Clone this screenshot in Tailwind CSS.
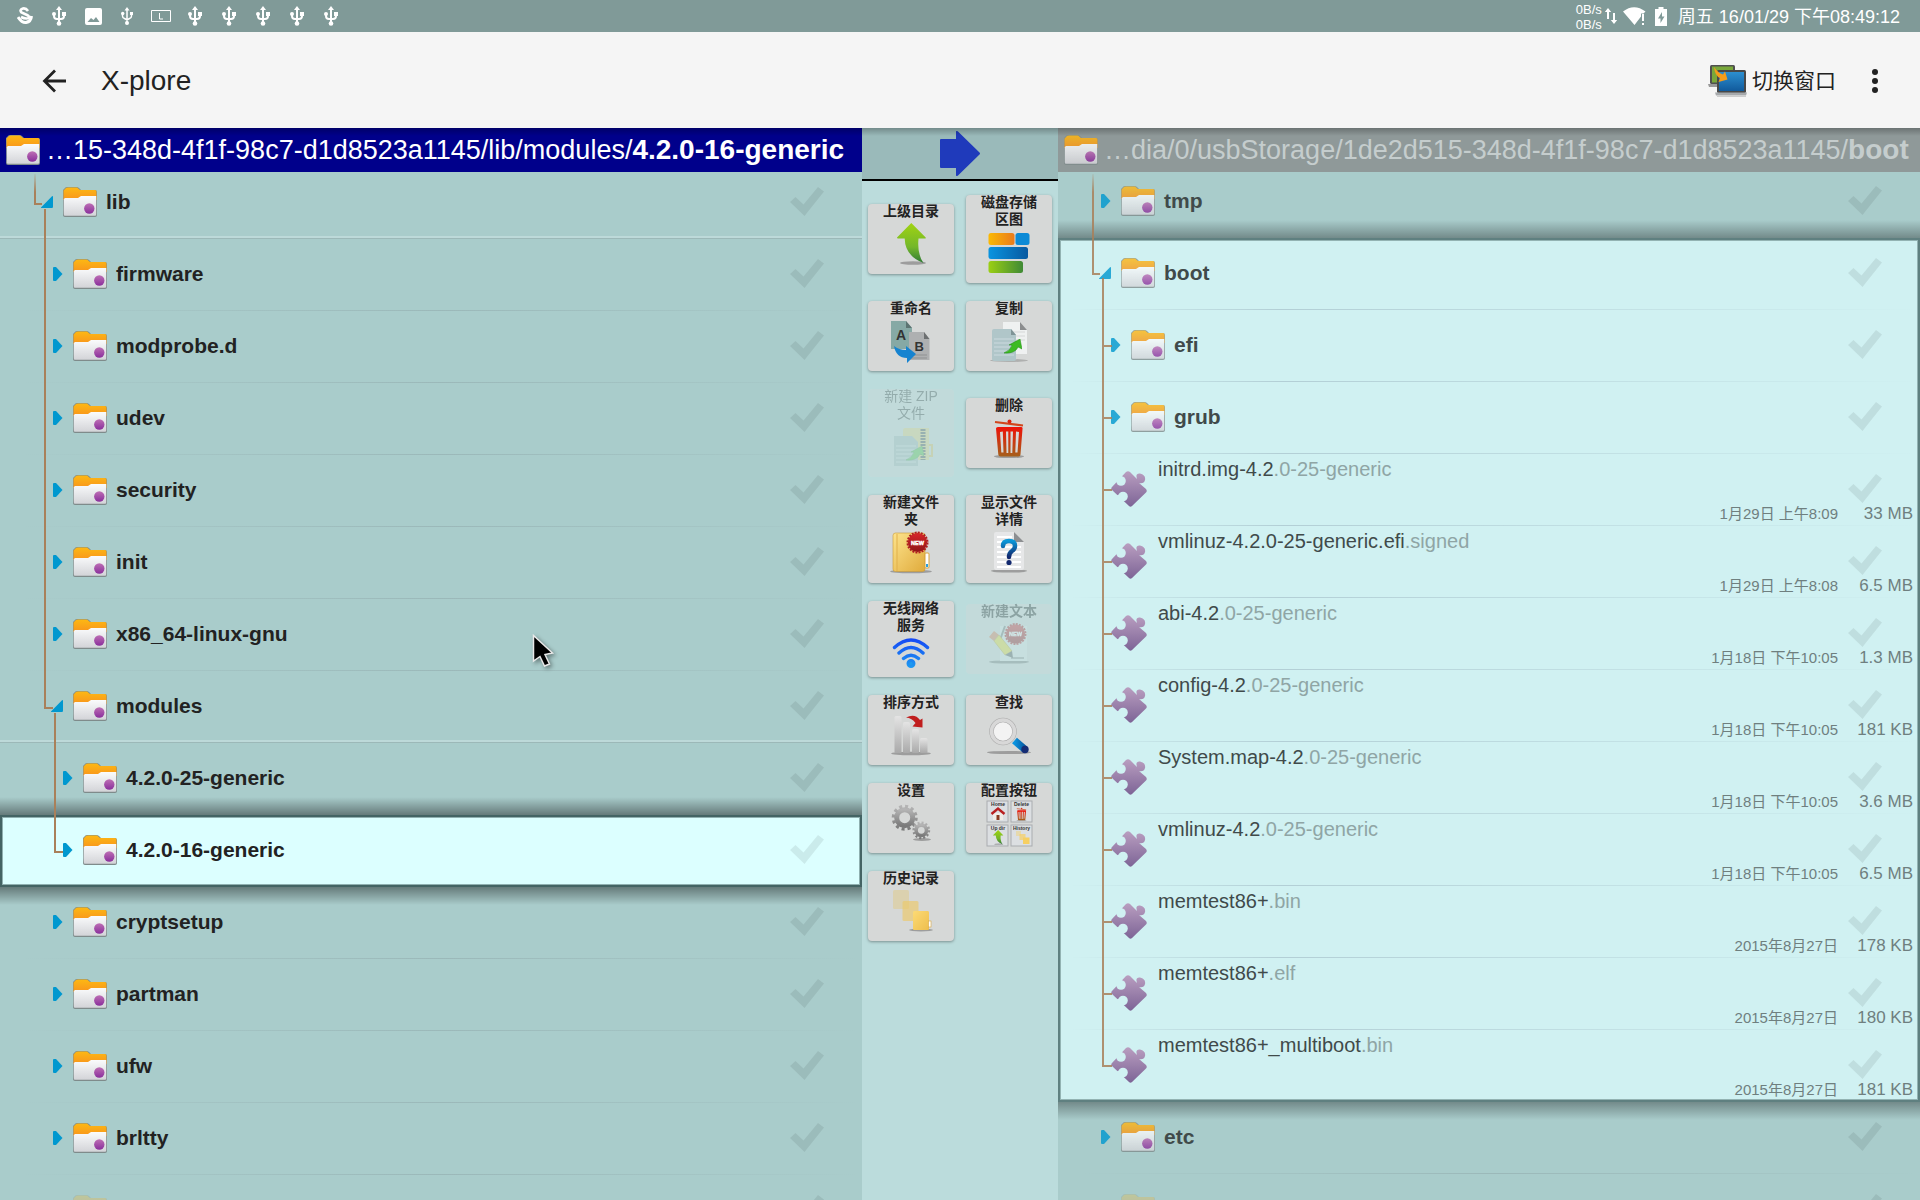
<!DOCTYPE html>
<html lang="zh-CN">
<head>
<meta charset="utf-8">
<meta name="viewport" content="width=device-width, initial-scale=1">
<title>X-plore</title>
<script src="https://cdn.jsdelivr.net/npm/@tailwindcss/browser@4"></script>
</head>
<body class="flex h-screen flex-col overflow-hidden bg-[#a9cccb] font-['Liberation_Sans','Noto_Sans_CJK_SC',sans-serif] text-[#222]">

<!-- shared icons -->
<svg class="absolute size-0" aria-hidden="true">
  <defs>
    <linearGradient id="gOrange" x2="0" y2="1"><stop stop-color="#fdb813"/><stop offset="1" stop-color="#f8951d"/></linearGradient>
    <linearGradient id="gPaper" x2="0" y2="1"><stop stop-color="#fafbfc"/><stop offset="1" stop-color="#d3d4d8"/></linearGradient>
    <linearGradient id="gDot" x2="0" y2="1"><stop stop-color="#bd6fb4"/><stop offset="1" stop-color="#8a2f9c"/></linearGradient>
    <linearGradient id="gPuzzle" x2="0" y2="1"><stop stop-color="#b99ec0"/><stop offset="1" stop-color="#7d6496"/></linearGradient>
    <linearGradient id="gGreen" x2="0" y2="1"><stop stop-color="#a0d312"/><stop offset=".6" stop-color="#74b72a"/><stop offset="1" stop-color="#2f7a35"/></linearGradient>
    <linearGradient id="gGreenH"><stop stop-color="#9bcf14"/><stop offset="1" stop-color="#3f8a35"/></linearGradient>
    <linearGradient id="gAmberH"><stop stop-color="#fbb904"/><stop offset="1" stop-color="#e97a1c"/></linearGradient>
    <linearGradient id="gBlueH"><stop stop-color="#0a94e0"/><stop offset="1" stop-color="#0759a0"/></linearGradient>
    <linearGradient id="gRed" x2="0" y2="1"><stop stop-color="#ee1208"/><stop offset="1" stop-color="#a5601c"/></linearGradient>
    <linearGradient id="gYellow" x2="1" y2="1"><stop stop-color="#fde38c"/><stop offset="1" stop-color="#e0ab3c"/></linearGradient>
    <linearGradient id="gBadge" x2="0" y2="1"><stop stop-color="#d9252a"/><stop offset="1" stop-color="#8e1518"/></linearGradient>
    <linearGradient id="gWifi" gradientUnits="userSpaceOnUse" x1="0" y1="4" x2="0" y2="34"><stop stop-color="#1546f5"/><stop offset="1" stop-color="#1e9af0"/></linearGradient>
    <linearGradient id="gBar" x2="0" y2="1"><stop stop-color="#e4e4e4"/><stop offset="1" stop-color="#a9a9a9"/></linearGradient>
    <linearGradient id="gGear" x2="0" y2="1"><stop stop-color="#b4b4b4"/><stop offset="1" stop-color="#7a7a7a"/></linearGradient>
    <linearGradient id="gQ" x2="0" y2="1"><stop stop-color="#0a97d8"/><stop offset="1" stop-color="#12286e"/></linearGradient>
    <linearGradient id="gFade" gradientUnits="userSpaceOnUse" x1="0" y1="0" x2="0" y2="20"><stop stop-color="#a9805a" stop-opacity="0"/><stop offset="1" stop-color="#a9805a"/></linearGradient>
    <mask id="mPuzzle"><rect width="36" height="36" fill="#fff"/><circle cx="10" cy="10" r="4.8"/><path d="M2 6 9 13 13 8 8 2z"/><circle cx="12" cy="25.500" r="4.8"/><path d="M4 25 10 23 13 30 9 31z"/></mask>
  </defs>
  <symbol id="folder" viewBox="0 0 34 30">
    <path d="M1 5.500 0 28q0 2 2 2h30q2 0 2-2V5q0-2-2-2H18l-2-2q-1-1-3-1H4Q2 0 1.500 1.500L0 3v20" fill="#7f8b8b"/>
    <path d="M.5 13V3.500L3 1Q3.500.5 5 .5h9L17 3h15q1.500 0 1.500 1.500V13z" fill="url(#gOrange)"/>
    <path d="M.8 12 2 11h13l3-2h15.200v18.500q0 1.200-1.200 1.200H2q-1.200 0-1.200-1.200z" fill="url(#gPaper)"/>
    <circle cx="26.300" cy="21.500" r="5.200" fill="url(#gDot)"/>
  </symbol>
  <symbol id="puzzle" viewBox="0 0 36 36">
    <g mask="url(#mPuzzle)" fill="url(#gPuzzle)"><path d="M1 16 15 1Q17-.5 19 1L26 8Q24 2 29 2.500 35 4 34 9 33 13 28 12L35 18Q36.500 20 35 21.500L21 35Q19.500 36.500 18 35L1 19Q-.5 17.500 1 16z"/></g>
  </symbol>
  <symbol id="tick" viewBox="0 0 34 29"><path d="M0 15 5.500 10 13.500 17.500 28 0 34 4.500 14.500 29z"/></symbol>
  <symbol id="closed" viewBox="0 0 14 14"><path d="M0 1Q0 0 1 0H3L9.500 7 3 14H1Q0 14 0 13z" fill="currentColor"/></symbol>
  <symbol id="open" viewBox="0 0 14 14"><path d="M-2 12.500 9 1.200Q10 .8 10 2V11.500Q10 13 9 13H-1.500Q-2.500 13-2 12.500z" transform="translate(2)" fill="currentColor"/></symbol>
  <symbol id="usb" viewBox="0 0 14 20"><g fill="none" stroke="#fff" stroke-width="2"><path d="M7 3V17M2 7v3q0 3 3 3h4q3 0 3-3V7"/></g><g fill="#fff"><path d="M7 0 10 4H4z"/><circle cx="7" cy="17.500" r="2.300"/><circle cx="2" cy="8" r="2"/><rect x="10" y="6" width="4" height="4"/></g></symbol>
  <symbol id="badge" viewBox="-12 -12 24 24">
    <circle r="9.600" fill="url(#gBadge)"/><circle r="10" fill="none" stroke="#b01c20" stroke-width="2" stroke-dasharray="2 1.140"/>
  </symbol>
  <symbol id="swoosh" viewBox="0 0 18 15"><path d="M0 14Q7 11 8 6L5 6 16 0 18 10 14 8Q11 15 0 14z" fill="#3dbb22" stroke="#1f8a15" stroke-width=".5"/></symbol>
  <symbol id="uparrow" viewBox="0 0 48 48">
    <ellipse cx="26" cy="43" rx="13" ry="1.800" fill="#777" opacity=".6"/>
    <path d="M24.300 3 10 17.500Q10 18.500 11 18.500H17.700Q18 36 36.500 43 30 34 31.500 18.500H38Q39 18.500 38.700 17.500z" fill="url(#gGreen)"/>
  </symbol>
  <symbol id="bin" viewBox="0 0 48 48">
    <ellipse cx="24" cy="42.500" rx="15" ry="1.600" fill="#777" opacity=".6"/>
    <path d="M10 8 38 11.500" stroke="#d2451c" stroke-width="2.200"/><circle cx="24.500" cy="7.500" r="2" fill="#d9220f"/>
    <path fill-rule="evenodd" d="M11 14.500Q11 13 13 13H36Q38 13 37.500 15L35.500 40.500Q35.500 42.500 33.500 42.500H15.500Q13.500 42.500 13.300 40.500zM15 18 16.300 38.500H18.500L17.800 17.500zM21 17.500 21.500 39H23.300V17.500zM25.500 17.500V39H27.300L28 17.500zM31 17.500 30.300 38.500H32.500L34 18z" fill="url(#gRed)"/>
  </symbol>
</svg>

<header class="shrink-0">
  <!-- status bar -->
  <div class="flex h-8 items-center bg-[#809a98] pr-5 pl-2 text-white">
    <div class="flex items-center" aria-hidden="true">
      <span class="grid w-[34px] place-items-center"><svg width="17" height="18" viewBox="0 0 17 18" fill="none" stroke="#fff"><path d="M11 4Q9 1 6 1.500 2 3 4.500 5.500L10 8Q13 9.500 11.500 11 9 12.500 4 10" stroke-width="2.600"/><path d="M1 10Q5 16 9 15.500 14 14.500 14.500 9" stroke-width="3"/></svg></span>
      <span class="grid w-[34px] place-items-center"><svg width="14" height="20"><use href="#usb"/></svg></span>
      <span class="grid w-[34px] place-items-center"><svg width="17" height="17" viewBox="0 0 17 17"><path fill="#fff" fill-rule="evenodd" d="M2 0H15Q17 0 17 2V15Q17 17 15 17H2Q0 17 0 15V2Q0 0 2 0zM2.500 14H14.500L11 9 8.500 12 6 10z"/></svg></span>
      <span class="grid w-[34px] place-items-center"><svg width="12" height="18" viewBox="0 0 12 18" fill="none" stroke="#fff" stroke-width="1.500"><path d="M6 2V16M1.500 6v3q0 2 2 2.500L6 13l2.500-1.500q2-.5 2-2.500V6"/><g fill="#fff" stroke="none"><path d="M6 0 8.500 3.500H3.500z"/><circle cx="6" cy="16" r="2"/><circle cx="1.700" cy="6.500" r="1.700"/><path d="M9 5h3v3H9z"/></g></svg></span>
      <span class="grid w-[34px] place-items-center"><svg width="20" height="12" viewBox="0 0 20 12" fill="none" stroke="#fff"><path d="M.5.5H19.500V11.500H.5zM8.500 3V9H12"/></svg></span>
      <span class="grid w-[34px] place-items-center"><svg width="14" height="20"><use href="#usb"/></svg></span>
      <span class="grid w-[34px] place-items-center"><svg width="14" height="20"><use href="#usb"/></svg></span>
      <span class="grid w-[34px] place-items-center"><svg width="14" height="20"><use href="#usb"/></svg></span>
      <span class="grid w-[34px] place-items-center"><svg width="14" height="20"><use href="#usb"/></svg></span>
      <span class="grid w-[34px] place-items-center"><svg width="14" height="20"><use href="#usb"/></svg></span>
    </div>
    <div class="ml-auto flex items-center">
      <div class="pt-[2px] text-[13px] leading-[15px]"><p>0B/s</p><p>0B/s</p></div>
      <svg class="ml-[3px]" width="12" height="16" viewBox="0 0 12 16" fill="#fff"><path d="M3 0 6.200 4H4V11H2V4H-.2zM9 16 5.800 12H8V5h2v7h2.200z"/></svg>
      <svg class="ml-[6px]" width="23" height="19" viewBox="0 0 23 19" fill="#fff"><path d="M0 4.500Q11-4 22.500 4.500L20.500 6.500H18V9.500L11.500 18z"/><path d="M19 7h2v7h-2zM19 16h2v2h-2z"/></svg>
      <svg class="ml-[9px]" width="12" height="19" viewBox="0 0 12 19"><path fill="#fff" fill-rule="evenodd" d="M3.500 0H8.500V2H12V19H0V2H3.500zM7 5 3 11.500H5.500V16L9.500 9.500H7z"/></svg>
      <time class="ml-[11px] pt-[2px] text-lg leading-7">周五 16/01/29 下午08:49:12</time>
    </div>
  </div>
  <!-- app bar -->
  <div class="flex h-24 items-center bg-[#f5f5f5] pt-px pr-10 pl-[42px]">
    <button type="button" aria-label="返回"><svg width="24" height="24" viewBox="0 0 24 24" fill="none" stroke="#222" stroke-width="2.800"><path d="M13 1.500 2.500 12 13 22.500M2.500 12H24"/></svg></button>
    <h1 class="ml-[35px] pt-px text-[28px] leading-9">X-plore</h1>
    <button type="button" class="ml-auto flex items-center gap-1 text-[21px] leading-8">
      <svg width="40" height="34" viewBox="0 0 40 34"><defs><linearGradient id="scrB" x2="0" y2="1"><stop stop-color="#2c8fd0"/><stop offset="1" stop-color="#115a9c"/></linearGradient></defs>
        <path d="M0 20H9V23H1z" fill="#999"/><rect x="2" y="1" width="25" height="19" rx="1.500" fill="#505050"/><rect x="4" y="2.500" width="21" height="16" fill="#79a83a"/>
        <rect x="9" y="6" width="29" height="23" rx="1.500" fill="#484848"/><rect x="11" y="8" width="25" height="19" fill="url(#scrB)"/><path d="M7 28.500H39L38 31.500H8z" fill="#a6a9ac"/><path d="M9 32.500H38" stroke="#ccc"/>
        <path d="M6 3Q7 12 12 14L10.500 18 19.500 15.500 17 7.500 15 10.500Q10 9 6 3z" fill="#f59c1a"/></svg>
      切换窗口</button>
    <button type="button" class="ml-[34px]" aria-label="更多选项"><svg width="10" height="26" viewBox="0 0 10 26" fill="#222"><circle cx="5" cy="4" r="3"/><circle cx="5" cy="13" r="3"/><circle cx="5" cy="22" r="3"/></svg></button>
  </div>
</header>

<main class="relative flex min-h-0 flex-1">
  <div class="pointer-events-none absolute inset-x-0 top-0 z-10 h-2 bg-linear-to-b from-black/25 to-transparent"></div>

  <section class="flex min-w-0 flex-1 flex-col" aria-label="左侧窗格">
    <h2 class="flex h-11 shrink-0 items-center overflow-hidden bg-[#00008b] pl-[6px] text-[27px] whitespace-nowrap text-white">
      <svg class="mr-[6px] shrink-0" width="34" height="30"><use href="#folder"/></svg>…15-348d-4f1f-98c7-d1d8523a1145/lib/modules/<b class="text-[28px]">4.2.0-16-generic</b></h2>
    <div class="relative min-h-0 flex-1 overflow-hidden">
      <ul id="leftTree" class="-mt-[5px] text-[#222]"></ul>
      <svg class="pointer-events-none absolute inset-0 size-full" fill="none" stroke="#a9805a" stroke-width="2"><path d="M35 2V32H42" stroke="url(#gFade)"/><path d="M45 37V536H53M55 541V680H63"/></svg>
    </div>
  </section>

  <nav class="w-[196px] shrink-0 bg-[#bbdcdc]" aria-label="操作">
    <button type="button" class="grid h-[53px] w-full place-items-center border-b-2 border-black bg-[#9ababa]" aria-label="切换到右侧窗格">
      <svg width="40" height="45" viewBox="0 0 40 45" fill="#1f3abb"><path d="M0 9Q0 8 1 8H16V1Q16-1 18 .5L39.500 21.500Q40.500 22.500 39.500 23.500L18 44.500Q16 46 16 44V37H1Q0 37 0 36z"/></svg>
    </button>
    <div class="grid grid-cols-2 items-center gap-x-3 gap-y-[18px] px-[6px] pt-[14px] text-center text-sm leading-[17px] font-semibold">
      <button type="button" class="flex h-[70px] flex-col items-center rounded bg-[#d6d8d7] shadow-[0_1px_3px_rgba(0,0,0,0.35)]"><span class="-mt-px w-14">上级目录</span>
        <svg width="48" height="48"><use href="#uparrow"/></svg></button>
      <button type="button" class="flex h-22 flex-col items-center rounded bg-[#d6d8d7] shadow-[0_1px_3px_rgba(0,0,0,0.35)]"><span class="-mt-px w-14">磁盘存储区图</span>
        <svg width="48" height="48"><rect x="3.500" y="5" width="26" height="12" rx="2.500" fill="url(#gAmberH)"/><rect x="30.500" y="5" width="14" height="12" rx="2.500" fill="#0b8ad6"/><rect x="3.500" y="19" width="39.500" height="12" rx="2.500" fill="url(#gBlueH)"/><rect x="3.500" y="33" width="34.500" height="12" rx="2.500" fill="url(#gGreenH)"/></svg></button>

      <button type="button" class="flex h-[70px] flex-col items-center rounded bg-[#d6d8d7] shadow-[0_1px_3px_rgba(0,0,0,0.35)]"><span class="-mt-px w-14">重命名</span>
        <svg width="48" height="48" font-family="Liberation Sans" font-weight="700"><path d="M4 4H19L25 11V32H4z" fill="#86a9a5"/><path d="M19 4 25 11H19z" fill="#5c7472"/><path d="M22 15H37L42.500 22V43H22z" fill="#aeb0b1"/><path d="M37 15 42.500 22H37z" fill="#6d7071"/><path d="M24 38H40M24 41H40" stroke="#8f9192"/><text x="9" y="23" font-size="14" fill="#333">A</text><text x="27.500" y="34" font-size="13" fill="#333">B</text><path d="M7 29Q12 33 19 33V29L29 37 20 46V41Q9 41 7 29z" fill="#1583d0"/></svg></button>
      <button type="button" class="flex h-[70px] flex-col items-center rounded bg-[#d6d8d7] shadow-[0_1px_3px_rgba(0,0,0,0.35)]"><span class="-mt-px w-14">复制</span>
        <svg width="48" height="48"><ellipse cx="24" cy="43.500" rx="19" ry="1.500" fill="#888" opacity=".5"/><path d="M18 5H35L42 13V37H18z" fill="#eff1f1"/><path d="M35 5 42 13H35z" fill="#8b8d8e"/><path d="M20 15H40M20 19H40M20 23H40" stroke="#d5d7d7"/><path d="M7 14Q7 12 9 12H26L31 18V42Q31 44 29 44H9Q7 44 7 42z" fill="#b0c6c9"/><path d="M26 12 31 18H26z" fill="#7f9496"/><path d="M9 22H29M9 26H29M9 30H29M9 34H29M9 38H29" stroke="#c2d4d7" stroke-width="1.500"/><use href="#swoosh" x="19" y="22" width="18" height="15"/></svg></button>

      <button type="button" disabled class="flex h-22 flex-col items-center rounded bg-[#d6d8d7] font-normal opacity-25"><span class="-mt-px w-14">新建 ZIP 文件</span>
        <svg width="48" height="48"><path d="M16 8Q16 6 18 6H42V38H16z" fill="#f0d070"/><path d="M42 23h3v11h-3" fill="none" stroke="#e8b84a" stroke-width="2"/><path d="M36 7V38" stroke="#333" stroke-width="5" stroke-dasharray="2 1"/><path d="M7 14H25L31 20V44H7z" fill="#a0b0b0"/><path d="M9 24H29M9 28H29M9 32H29M9 36H29M9 40H29" stroke="#c4d0d0" stroke-width="1.500"/><use href="#swoosh" x="19" y="24" width="18" height="15"/></svg></button>
      <button type="button" class="flex h-[70px] flex-col items-center rounded bg-[#d6d8d7] shadow-[0_1px_3px_rgba(0,0,0,0.35)]"><span class="-mt-px w-14">删除</span>
        <svg width="48" height="48"><use href="#bin"/></svg></button>

      <button type="button" class="flex h-22 flex-col items-center rounded bg-[#d6d8d7] shadow-[0_1px_3px_rgba(0,0,0,0.35)]"><span class="-mt-px w-14">新建文件夹</span>
        <svg width="48" height="48"><ellipse cx="24" cy="43.500" rx="21" ry="1.800" fill="#777" opacity=".6"/><rect x="6" y="5" width="32" height="38.500" rx="2.500" fill="url(#gYellow)" stroke="#c99a38" stroke-width=".6"/><path d="M10 6V43" stroke="#e0b04c"/><rect x="38" y="25" width="4" height="15" rx="1" fill="#fff" stroke="#d9a53c"/><path d="M40 36v3" stroke="#2aa0e0" stroke-width="2"/><use href="#badge" x="18.500" y="2.500" width="24" height="24"/><text x="30.500" y="16.500" text-anchor="middle" font-size="5.500" font-weight="700" fill="#fff" stroke="#fff" stroke-width=".4">NEW</text></svg></button>
      <button type="button" class="flex h-22 flex-col items-center rounded bg-[#d6d8d7] shadow-[0_1px_3px_rgba(0,0,0,0.35)]"><span class="-mt-px w-14">显示文件详情</span>
        <svg width="48" height="48"><ellipse cx="24" cy="43" rx="18" ry="1.600" fill="#777" opacity=".6"/><path d="M9 6Q9 4 11 4H29L39 14V40Q39 42 37 42H11Q9 42 9 40z" fill="#e6e7e8"/><path d="M29 4 39 14H29z" fill="#8d8f91"/><path d="M12 9H27M12 14H27M12 19H36M12 24H36M12 29H36M12 34H36M12 39H36" stroke="#fff" stroke-width="2"/><path d="M18 18Q18 13 24 13 30 13 30 18 30 21 27 23 24 25 24 29" fill="none" stroke="url(#gQ)" stroke-width="4.500" stroke-linecap="round"/><circle cx="24" cy="34.500" r="2.600" fill="#12286e"/></svg></button>

      <button type="button" class="flex h-[76px] flex-col items-center rounded bg-[#d6d8d7] shadow-[0_1px_3px_rgba(0,0,0,0.35)]"><span class="-mt-px w-14">无线网络服务</span>
        <svg width="48" height="36" fill="none" stroke="url(#gWifi)" stroke-width="3.400" stroke-linecap="round"><circle cx="24" cy="29.500" r="3" fill="#1e9af0" stroke-width="3"/><path d="M7.500 13.500Q24-1.500 40.500 13.500M12 19Q24 8 36 19M16.500 24.500Q24 18 31.500 24.500"/></svg></button>
      <button type="button" disabled class="flex h-[70px] flex-col items-center rounded bg-[#d6d8d7] opacity-30"><span class="-mt-px w-14">新建文本</span>
        <svg width="48" height="48"><ellipse cx="24" cy="42" rx="20" ry="1.600" fill="#777"/><path d="M15 6H42V41H15z" fill="#e4e6e6"/><path d="M15 20 20 6" stroke="#777" stroke-width="2"/><path d="M4 17 9 11 14 15 9 21z" fill="#e07a50"/><path d="M9 21 14 15 27 31 20 35z" fill="#f2dc30" stroke="#b59a20" stroke-width=".6"/><path d="M20 35 27 31 28 38z" fill="#555"/><path d="M26 38H39" stroke="#555"/><use href="#badge" x="18.500" y="2" width="24" height="24"/><text x="30.500" y="16" text-anchor="middle" font-size="5.500" font-weight="700" fill="#fff" stroke="#fff" stroke-width=".4">NEW</text></svg></button>

      <button type="button" class="flex h-[70px] flex-col items-center rounded bg-[#d6d8d7] shadow-[0_1px_3px_rgba(0,0,0,0.35)]"><span class="-mt-px w-14">排序方式</span>
        <svg width="48" height="48"><ellipse cx="24" cy="42.500" rx="20" ry="1.800" fill="#777" opacity=".6"/><g fill="url(#gBar)"><rect x="7.500" y="5" width="7" height="37" rx="1.500"/><rect x="16" y="11" width="7" height="31" rx="1.500"/><rect x="25" y="18" width="7" height="24" rx="1.500"/><rect x="33" y="27" width="7.500" height="15" rx="1.500"/></g><path d="M19 6.500Q28 2 33 9L35.500 7.500V16.500L25.500 15.500 28.500 12Q25 7 19 6.500z" fill="#c01e1e"/></svg></button>
      <button type="button" class="flex h-[70px] flex-col items-center rounded bg-[#d6d8d7] shadow-[0_1px_3px_rgba(0,0,0,0.35)]"><span class="-mt-px w-14">查找</span>
        <svg width="48" height="48"><ellipse cx="24" cy="41.500" rx="22" ry="1.600" fill="#777" opacity=".6"/><path d="M29.500 29.500 40 38.500" stroke="url(#gBlueH)" stroke-width="7.500"/><circle cx="40" cy="38.500" r="3.700" fill="#152c74"/><circle cx="18" cy="20.500" r="11.500" fill="#f3f3f3" stroke="#aaa" stroke-width="4.500"/><circle cx="18" cy="20.500" r="11.500" fill="none" stroke="#d8d8d8" stroke-width="3.500"/></svg></button>

      <button type="button" class="flex h-[70px] flex-col items-center rounded bg-[#d6d8d7] shadow-[0_1px_3px_rgba(0,0,0,0.35)]"><span class="-mt-px w-14">设置</span>
        <svg width="48" height="48" fill="none" stroke="url(#gGear)"><ellipse cx="35" cy="40.500" rx="9" ry="1.500" fill="#777" stroke="none" opacity=".6"/><circle cx="17.700" cy="18.700" r="8" stroke-width="5"/><circle cx="17.700" cy="18.700" r="11.300" stroke-width="3.400" stroke-dasharray="3 2.920"/><circle cx="34.300" cy="31.300" r="5.200" stroke-width="3.600"/><circle cx="34.300" cy="31.300" r="7.600" stroke-width="2.600" stroke-dasharray="2 1.980"/></svg></button>
      <button type="button" class="flex h-[70px] flex-col items-center rounded bg-[#d6d8d7] shadow-[0_1px_3px_rgba(0,0,0,0.35)]"><span class="-mt-px w-14">配置按钮</span>
        <svg width="48" height="48" font-family="Liberation Sans" font-size="5" text-anchor="middle"><g fill="#dcdfe2" stroke="#a9acb0"><rect x="2" y="2" width="21" height="21"/><rect x="26" y="2" width="21" height="21"/><rect x="2" y="26" width="21" height="21"/><rect x="26" y="26" width="21" height="21"/></g><g fill="#333"><text x="13" y="7">Home</text><text x="36.500" y="7">Delete</text><text x="13" y="31">Up dir</text><text x="36.500" y="31">History</text></g>
        <path d="M8 14H18V21H8z" fill="#f0ece6"/><path d="M6.500 15 13 9.500 19.500 15" fill="none" stroke="#b82020" stroke-width="2.400"/><path d="M11.500 16h3v5h-3z" fill="#8a3a20"/>
        <use href="#bin" x="28" y="7" width="17" height="16"/><use href="#uparrow" x="4" y="30" width="18" height="17"/><g fill="#f6cf62"><rect x="31" y="32" width="5" height="5" opacity=".4"/><rect x="34.500" y="35" width="6" height="6" opacity=".7"/><rect x="38" y="38.500" width="6.500" height="6.500"/></g></svg></button>

      <button type="button" class="flex h-[70px] flex-col items-center rounded bg-[#d6d8d7] shadow-[0_1px_3px_rgba(0,0,0,0.35)]"><span class="-mt-px w-14">历史记录</span>
        <svg width="48" height="48"><ellipse cx="34" cy="43" rx="12" ry="1.500" fill="#777" opacity=".6"/><rect x="6" y="3" width="16" height="19" rx="1.500" fill="#e4c872" opacity=".4"/><rect x="15.500" y="14" width="16" height="20" rx="1.500" fill="#ecca68" opacity=".65"/><rect x="26" y="24" width="16" height="19" rx="1.500" fill="url(#gYellow)"/><rect x="26" y="24" width="16" height="19" rx="1.500" fill="#fbd25e" opacity=".5"/><rect x="41.500" y="34" width="2.500" height="6" fill="#fff" stroke="#dba93c" stroke-width=".6"/></svg></button>
    </div>
  </nav>

  <section class="flex min-w-0 flex-1 flex-col" aria-label="右侧窗格">
    <h2 class="flex h-11 shrink-0 items-center overflow-hidden bg-[#8f9999] pl-[6px] text-[27px] whitespace-nowrap text-[#c5cdcd]">
      <svg class="mr-[6px] shrink-0 opacity-85" width="34" height="30"><use href="#folder"/></svg>…dia/0/usbStorage/1de2d515-348d-4f1f-98c7-d1d8523a1145/<b class="text-[28px]">boot</b></h2>
    <div class="relative min-h-0 flex-1 overflow-hidden">
      <div id="rightTree" class="-mt-[6px] text-[#404a4a]"></div>
      <svg class="pointer-events-none absolute inset-0 size-full opacity-85" fill="none" stroke="#a9805a" stroke-width="2"><path d="M35 2V102H42" stroke="url(#gFade)"/><path d="M45 106V894H54M45 174h9M45 246h9M45 318h9M45 390h9M45 462h9M45 534h9M45 606h9M45 678h9M45 750h9M45 822h9"/></svg>
    </div>
  </section>

  <!-- pointer -->
  <svg class="pointer-events-none absolute top-[506px] left-[532px] drop-shadow-[2px_2px_2px_rgba(0,0,0,0.4)]" width="24" height="34" viewBox="0 0 24 34"><path d="M1.500 1.500V27L8 22.500 12.500 32 17.500 30 13 20.500 20.500 19z" stroke="#e8e8e8" stroke-width="1.500"/></svg>
</main>

<script>
const indent = { 1: 'pl-[43px]', 2: 'pl-[53px]', 3: 'pl-[63px]' };
const arrowGap = { closed: 'mr-[6px]', open: '-ml-[2px] mr-2' };
const rules = {
  fade: '<span class="absolute right-0 bottom-0 left-3 h-px bg-linear-to-r from-transparent via-[#3c4664]/20 via-25% to-transparent"></span>',
  faint: '<span class="absolute right-0 bottom-0 left-5 h-px bg-linear-to-r from-transparent via-[#50505a]/16 via-50% to-transparent"></span>',
  level: '<span class="absolute inset-x-0 bottom-0 h-[3px] border-b border-[#9cb8b8] bg-[#bdd9d9]"></span>',
  none: ''
};
const tick = name => `<label class="absolute right-[38px] top-5 text-black/8"><input type="checkbox" class="absolute size-px appearance-none opacity-0" aria-label="${name || '项目'}"><svg width="34" height="29" fill="currentColor"><use href="#tick"/></svg></label>`;

// one directory row
const dir = (level, name, arrow = 'closed', rule = 'faint', dim = '') => `
  <li class="relative flex h-[72px] list-none items-center pb-[3px] ${indent[level]}">
    <svg class="${arrowGap[arrow]} shrink-0 text-[#0098cf] ${dim}" width="14" height="14"><use href="#${arrow}"/></svg>
    <svg class="shrink-0 ${dim}" width="34" height="30"><use href="#folder"/></svg>
    <b class="ml-[9px] text-[21px] leading-8">${name}</b>
    ${tick(name)}${rules[rule]}
  </li>`;

// one file row: icon, name with greyed extension, date and size
const file = (base, ext, date, size, rule = 'fade') => `
  <li class="relative flex h-[72px] list-none items-center pr-[7px] pl-[53px]">
    <svg class="mb-[2px] shrink-0" width="36" height="36"><use href="#puzzle"/></svg>
    <div class="ml-[11px] flex h-full flex-1 flex-col justify-between">
      <p class="text-xl leading-[30px]">${base}<span class="text-[#8fa5a5]">${ext}</span></p>
      <p class="flex items-center justify-end leading-6 text-[#6f7f7f]"><span class="text-[15px]">${date}</span><span class="w-[75px] text-right text-[17px] leading-6">${size}</span></p>
    </div>
    ${tick(base)}${rules[rule]}
  </li>`;

document.getElementById('leftTree').innerHTML =
  dir(1, 'lib', 'open', 'level') +
  ['firmware', 'modprobe.d', 'udev', 'security', 'init', 'x86_64-linux-gnu'].map(n => dir(2, n)).join('') +
  dir(2, 'modules', 'open', 'level') +
  dir(3, '4.2.0-25-generic', 'closed', 'none') +
  `<li class="relative list-none bg-[#dcffff] before:absolute before:inset-x-0 before:bottom-full before:h-[18px] before:bg-linear-to-t before:from-black/40 before:to-transparent after:absolute after:inset-x-0 after:top-full after:h-[18px] after:bg-linear-to-b after:from-black/40 after:to-transparent">
     <ul>${dir(3, '4.2.0-16-generic', 'closed', 'none')}</ul>
     <span class="pointer-events-none absolute inset-0 border-2 border-[#446464] shadow-[inset_0_0_0_1px_#8fb0b0]"></span>
   </li>` +
  ['cryptsetup', 'partman', 'ufw', 'brltty'].map(n => dir(2, n)).join('') +
  dir(2, '', 'closed', 'none', 'opacity-25');

document.getElementById('rightTree').innerHTML =
  `<ul>${dir(1, 'tmp', 'closed', 'none', 'opacity-80')}</ul>
   <div class="relative bg-[#d0f1f2] before:absolute before:inset-x-0 before:bottom-full before:h-[18px] before:bg-linear-to-t before:from-black/32 before:to-transparent after:absolute after:inset-x-0 after:top-full after:h-[18px] after:bg-linear-to-b after:from-black/32 after:to-transparent">
     <ul class="-mb-[2px]">` +
  dir(1, 'boot', 'open', 'fade', 'opacity-80') +
  dir(2, 'efi', 'closed', 'fade', 'opacity-80') +
  dir(2, 'grub', 'closed', 'fade', 'opacity-80') +
  file('initrd.img-4.2', '.0-25-generic', '1月29日 上午8:09', '33 MB') +
  file('vmlinuz-4.2.0-25-generic.efi', '.signed', '1月29日 上午8:08', '6.5 MB') +
  file('abi-4.2', '.0-25-generic', '1月18日 下午10:05', '1.3 MB') +
  file('config-4.2', '.0-25-generic', '1月18日 下午10:05', '181 KB') +
  file('System.map-4.2', '.0-25-generic', '1月18日 下午10:05', '3.6 MB') +
  file('vmlinuz-4.2', '.0-25-generic', '1月18日 下午10:05', '6.5 MB') +
  file('memtest86+', '.bin', '2015年8月27日', '178 KB') +
  file('memtest86+', '.elf', '2015年8月27日', '180 KB') +
  file('memtest86+_multiboot', '.bin', '2015年8月27日', '181 KB', 'none') +
  `</ul>
     <span class="pointer-events-none absolute inset-0 border-2 border-[#5f8080] shadow-[inset_0_0_0_1px_#93b3b3]"></span>
   </div>
   <ul class="pt-[2px]">` +
  dir(1, 'etc', 'closed', 'faint', 'opacity-80') +
  dir(1, '', 'closed', 'none', 'opacity-25') + '</ul>';
</script>
</body>
</html>
